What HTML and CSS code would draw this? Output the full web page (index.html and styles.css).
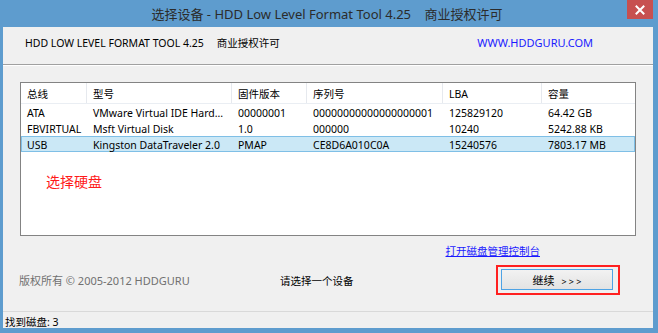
FILE: index.html
```html
<!DOCTYPE html>
<html lang="zh-CN">
<head>
<meta charset="utf-8">
<title>选择设备</title>
<link rel="stylesheet" href="styles.css">
</head>
<body>
<div class="window">
  <div class="titlebar">
    <span class="title">选择设备 - HDD Low Level Format Tool 4.25&nbsp;&nbsp;&nbsp;&nbsp;商业授权许可</span>
    <span class="close">
      <svg width="10" height="10" viewBox="0 0 10 10"><path d="M1.5 1.5 L8.5 8.5 M8.5 1.5 L1.5 8.5" stroke="#fff" stroke-width="2" stroke-linecap="square"/></svg>
    </span>
  </div>
  <div class="client">
    <div class="header">
      <span class="product">HDD LOW LEVEL FORMAT TOOL 4.25</span>
      <span class="license">商业授权许可</span>
      <span class="site">WWW.HDDGURU.COM</span>
    </div>
    <div class="main">
      <div class="listbox">
        <div class="grid head">
          <div class="cell">总线</div>
          <div class="cell">型号</div>
          <div class="cell">固件版本</div>
          <div class="cell">序列号</div>
          <div class="cell">LBA</div>
          <div class="cell">容量</div>
        </div>
        <div class="grid row">
          <div class="cell">ATA</div>
          <div class="cell">VMware Virtual IDE Hard...</div>
          <div class="cell">00000001</div>
          <div class="cell">00000000000000000001</div>
          <div class="cell">125829120</div>
          <div class="cell">64.42 GB</div>
        </div>
        <div class="grid row">
          <div class="cell">FBVIRTUAL</div>
          <div class="cell">Msft Virtual Disk</div>
          <div class="cell">1.0</div>
          <div class="cell">000000</div>
          <div class="cell">10240</div>
          <div class="cell">5242.88 KB</div>
        </div>
        <div class="grid row selected">
          <div class="cell">USB</div>
          <div class="cell">Kingston DataTraveler 2.0</div>
          <div class="cell">PMAP</div>
          <div class="cell">CE8D6A010C0A</div>
          <div class="cell">15240576</div>
          <div class="cell">7803.17 MB</div>
        </div>
        <div class="hint">选择硬盘</div>
      </div>
      <div class="linkrow"><a class="link" href="#">打开磁盘管理控制台</a></div>
      <div class="actions">
        <span class="copyright">版权所有 © 2005-2012 HDDGURU</span>
        <span class="message">请选择一个设备</span>
        <span class="highlight"><button class="btn">继续 <span class="arrows">&gt; &gt; &gt;</span></button></span>
      </div>
    </div>
    <div class="statusbar">找到磁盘: 3</div>
  </div>
</div>
</body>
</html>
```
FILE: styles.css
```css
html, body {
  margin: 0;
  padding: 0;
}
body {
  width: 658px;
  height: 333px;
  overflow: hidden;
  background: #5e9cce;
  font-family: "Noto Sans", "Noto Sans CJK SC", sans-serif;
  font-size: 10.5px;
  color: #000;
}
.window {
  display: flex;
  flex-direction: column;
  height: 333px;
}
.titlebar {
  position: relative;
  height: 27px;
  display: flex;
  align-items: center;
  justify-content: center;
}
.title {
  font-size: 13px;
  color: #2b2b2b;
  margin-right: 4px;
  white-space: pre;
}
.close {
  position: absolute;
  top: 0;
  right: 5px;
  width: 26px;
  height: 19px;
  background: #c75050;
  display: flex;
  align-items: center;
  justify-content: center;
}
.client {
  margin: 0 5px 0 3px;
  height: 301px;
  background: #f0f0f0;
  display: flex;
  flex-direction: column;
}
.header {
  height: 38px;
  box-sizing: border-box;
  padding-bottom: 6px;
  display: flex;
  align-items: center;
  border-bottom: 1px solid #a0a0a0;
  box-shadow: 0 1px 0 #ffffff;
  flex: none;
}
.product {
  margin-left: 22px;
}
.license {
  margin-left: 13px;
}
.site {
  margin-left: auto;
  margin-right: 60px;
  color: #1a1aff;
  font-size: 11px;
}
.main {
  flex: 1;
  padding: 17px 17px 0 17px;
  display: flex;
  flex-direction: column;
}
.listbox {
  width: 614px;
  height: 152px;
  background: #fff;
  border: 1px solid #838383;
  box-sizing: content-box;
}
.grid {
  display: grid;
  grid-template-columns: 66px 145px 75px 136px 99px 1fr;
  align-items: center;
}
.head {
  height: 20px;
  border-bottom: 1px solid #eaeef3;
}
.head .cell {
  border-right: 1px solid #e6e9ee;
  height: 20px;
  box-sizing: border-box;
  padding-top: 3px;
  line-height: 17px;
}
.head .cell:last-child {
  border-right: none;
}
.cell {
  padding-left: 6px;
  white-space: nowrap;
  overflow: hidden;
}
.row {
  height: 16px;
  line-height: 16px;
}
.row .cell {
  padding-top: 2px;
  line-height: 14px;
}
.selected {
  background: #cbe8f6;
  box-shadow: inset 0 0 0 1px #7fbfe6;
}
.hint {
  margin: 19px 0 0 25px;
  font-size: 14px;
  color: #ff1a1a;
}
.linkrow {
  display: flex;
  justify-content: flex-end;
  padding-right: 96px;
  margin-top: 7px;
  height: 16px;
}
.link {
  color: #1a1aff;
  text-decoration: underline;
}
.actions {
  display: grid;
  grid-template-columns: 261px 216px auto;
  align-items: center;
  margin-top: 6px;
  margin-left: -1px;
}
.copyright {
  color: #707070;
  font-size: 11px;
}
.highlight {
  justify-self: start;
  border: 2px solid #ff2020;
  padding: 2px 5px 3px 3px;
  display: flex;
}
.btn {
  width: 112px;
  height: 21px;
  border: 1px solid #4ea3e5;
  background: linear-gradient(#f2f2f2, #e3e3e3);
  font-family: "Noto Sans", "Noto Sans CJK SC", sans-serif;
  font-size: 11px;
  color: #000;
  padding: 0;
}
.arrows {
  font-size: 9px;
  margin-left: 4px;
}
.statusbar {
  margin-top: auto;
  height: 17px;
  box-sizing: border-box;
  border-top: 1px solid #d9d9d9;
  padding: 3px 0 0 2px;
  line-height: 14px;
  flex: none;
}
```
